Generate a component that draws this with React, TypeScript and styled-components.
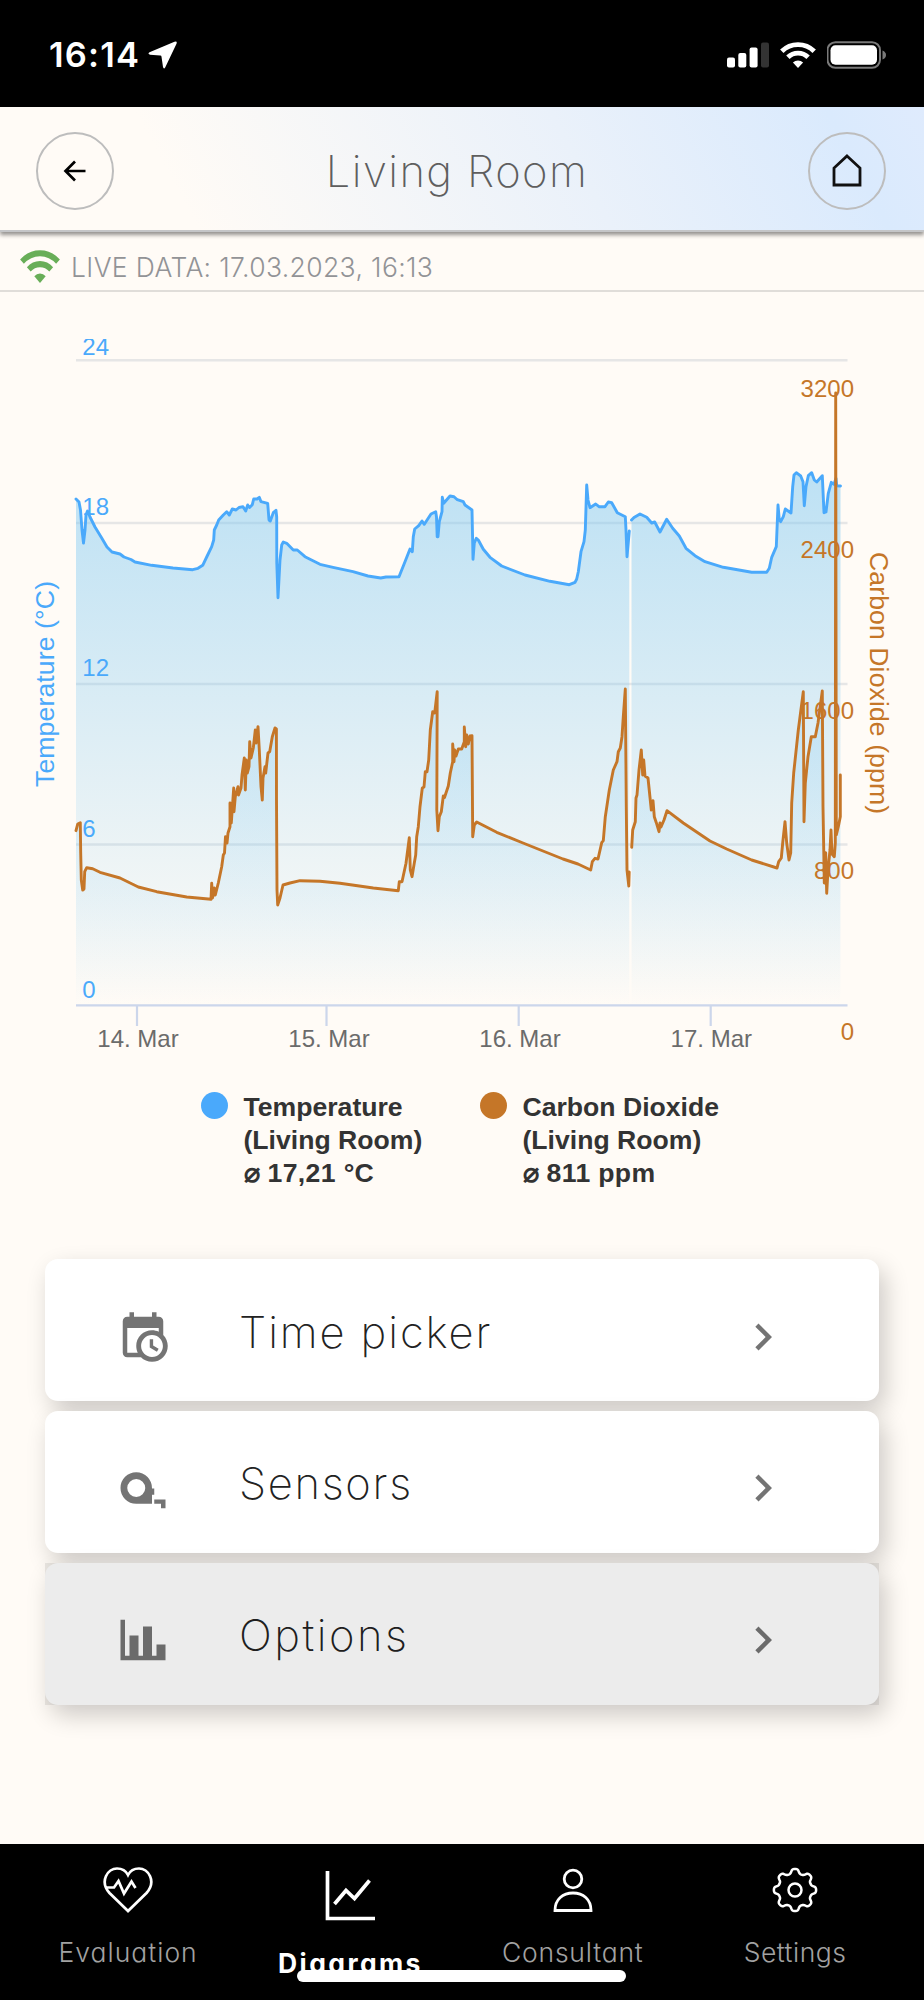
import React from "react";
import styled, { createGlobalStyle } from "styled-components";

const GlobalStyle = createGlobalStyle`
  * { box-sizing: border-box; }
  body { margin: 0; background: #fffbf6; }
`;

const BLUE = "#4aa9fb";
const ORANGE = "#c57628";
const THIN = `Inter, "Liberation Sans", sans-serif`;

const Screen = styled.div`
  width: 924px;
  height: 2000px;
  display: flex;
  flex-direction: column;
  background: #fffbf6;
  overflow: hidden;
  font-family: ${THIN};
`;

const StatusBar = styled.div`
  height: 107px;
  flex: none;
  background: #000;
  color: #fff;
  display: flex;
  align-items: center;
  justify-content: space-between;
  padding: 3px 38px 0 49px;
`;

const Clock = styled.div`
  display: flex;
  align-items: center;
  gap: 8px;
  font-size: 34.5px;
  font-weight: 600;
  line-height: 40px;
  letter-spacing: 1.2px;
`;

const StatusIcons = styled.div`
  display: flex;
  align-items: center;
  gap: 11px;
`;

const Header = styled.header`
  height: 125px;
  flex: none;
  display: flex;
  align-items: center;
  justify-content: space-between;
  padding: 5px 38px 0 36px;
  z-index: 1;
  background: linear-gradient(62deg, #fffbf6 20%, #eaf1fa 62%, #daeafd 90%, #dfebfd 100%);
  border-bottom: 2px solid #c4c5c7;
  box-shadow: 0 3px 4px rgba(0, 0, 0, 0.42);
`;

const Title = styled.h1`
  margin: 0;
  padding-right: 8px;
  font-size: 43.5px;
  font-weight: 200;
  letter-spacing: 1.4px;
  color: #5e5e5e;
`;

const RoundButton = styled.button`
  width: 78px;
  height: 78px;
  border-radius: 50%;
  border: 2px solid #bdbdbd;
  background: transparent;
  padding: 0;
  display: grid;
  place-items: center;
`;

const LiveRow = styled.div`
  height: 60px;
  flex: none;
  display: flex;
  align-items: center;
  gap: 11px;
  padding: 10px 20px 0;
  border-bottom: 2px solid #e0ddd9;
  color: #929396;
`;

const LiveText = styled.span`
  padding-top: 2px;
  font-size: 26.5px;
  font-weight: 300;
  letter-spacing: 0.37px;
`;

const GreenMark = styled.span`
  display: flex;
  color: #68ae58;
`;

const ChartArea = styled.div`
  height: 781px;
  flex: none;
  padding-top: 47px;
  svg { display: block; }
`;

const Legend = styled.div`
  height: 186px;
  flex: none;
  display: flex;
  padding: 17.5px 0 0 200.5px;
`;

const LegendItem = styled.div`
  width: 279px;
  display: flex;
  gap: 16px;
  font: bold 26.6px/33.4px "Liberation Sans", Arial, sans-serif;
  color: #333;
`;

const Average = styled.span`
  letter-spacing: 0.35px;
`;

const Dot = styled.span<{ $color: string }>`
  width: 27px;
  height: 27px;
  border-radius: 50%;
  margin-top: 1px;
  background: ${(p) => p.$color};
`;

const Menu = styled.div`
  flex: 1;
  padding: 0 45px;
  display: flex;
  flex-direction: column;
  gap: 9.6px;
`;

const MenuCard = styled.button<{ $pressed?: boolean }>`
  position: relative;
  height: 142.2px;
  border: 0;
  padding: 13px 89px 0 71px;
  border-radius: 13px;
  background: #fff;
  box-shadow: 6px 10px 24px rgba(0, 0, 0, 0.2);
  display: flex;
  align-items: center;
  color: #747474;
  &::after {
    content: "";
    display: ${(p) => (p.$pressed ? "block" : "none")};
    position: absolute;
    inset: 0;
    background: rgba(0, 0, 0, 0.075);
  }
`;

const MenuLabel = styled.span<{ $spacing: number }>`
  flex: 1;
  margin: -10px 0 0 69px;
  text-align: left;
  font: 200 43.5px/54px ${THIN};
  letter-spacing: ${(p) => p.$spacing}px;
  color: #222;
`;

const Nav = styled.nav`
  position: relative;
  height: 156px;
  flex: none;
  background: #000;
  display: grid;
  grid-template-columns: repeat(4, 222.3px);
  padding-left: 17px;
  overflow: hidden;
`;

const NavItem = styled.div<{ $active?: boolean; $spacing: number }>`
  display: flex;
  flex-direction: column;
  align-items: center;
  padding-top: ${(p) => (p.$active ? 26 : 22)}px;
  gap: ${(p) => (p.$active ? 25 : 22)}px;
  color: ${(p) => (p.$active ? "#fff" : "#a2a2a2")};
  font-size: 26.500px;
  line-height: 32px;
  font-weight: ${(p) => (p.$active ? 700 : 300)};
  font-feature-settings: "cv11";
  letter-spacing: ${(p) => p.$spacing}px;
  svg { color: #fff; flex: none; }
`;

const HomeIndicator = styled.div`
  position: absolute;
  left: 297px;
  top: 126px;
  width: 329px;
  height: 12px;
  border-radius: 6px;
  background: #fff;
`;

type Pt = [number, number];

const tempSegments: Pt[][] = [
  [
    [76, 499], [79, 502], [80.5, 510], [82, 530], [83.5, 543], [85, 530], [86, 515], [87.5, 511], [90, 517], [95, 527],
    [101.7, 538], [107, 547], [112, 552], [120, 554], [124, 557], [131, 559.5], [135, 562], [151.7, 565.3], [173, 568],
    [192.7, 569.7], [198, 568.3], [202.7, 565.3], [206.7, 557], [211.7, 546.7], [213.7, 540], [214.3, 530], [216.7, 525],
    [218.7, 520], [223.3, 515], [226.7, 511.7], [229.3, 515], [232.3, 509], [236, 510], [239, 507.5], [243, 506.7],
    [245.7, 511], [247.7, 505], [249.5, 507.5], [252.3, 504.7], [253.7, 499], [257, 499], [259.3, 497.3], [261, 501.7],
    [267.7, 503.3], [269, 520], [270.3, 521], [273.3, 512.7], [276, 510.3], [276.7, 517], [276.8, 563], [278, 597.7],
    [280, 560], [281.7, 545], [283.3, 542], [286.7, 543.3], [293.3, 550], [297.3, 550], [305, 556.7], [320, 564.3],
    [333, 567.3], [353, 571.7], [368, 576], [380.7, 578], [386, 577], [399, 576.7], [405, 561.7], [410, 549],
    [412.3, 551.7], [413.3, 536.7], [414.7, 529], [418.7, 525.7], [422, 521], [424.3, 524.3], [431, 514], [435.7, 511.7],
    [436.5, 517], [437.2, 536.7], [438, 536.7], [439.3, 521.7], [442, 511.7], [442.3, 497.3], [443.7, 503.3], [450, 496],
    [454, 496.7], [457.3, 499.7], [463.3, 501.7], [465, 505], [472, 510], [472.7, 543.3], [473, 559.3], [474.3, 543],
    [476.3, 538.3], [478.3, 540], [483.3, 549.3], [490, 557.3], [501.7, 566], [525, 575], [550, 581.3], [569.3, 584.7],
    [575, 582.3], [576.7, 579], [578.3, 571.7], [581, 551.7], [584, 541.7], [585.3, 530], [586.7, 485], [588, 500],
    [590, 507.7], [595.7, 504], [599, 506.7], [605, 506.7], [608.3, 502], [611.7, 502.7], [617.3, 512.7], [625.3, 516.7],
    [626, 530], [627, 556.7], [629.3, 531],
  ],
  [
    [631.5, 520], [634, 517.5], [640, 514], [646.7, 517.3], [651.7, 523], [654.7, 522], [660, 532], [666.7, 519.3],
    [672.7, 528.3], [679.3, 536], [686, 548.3], [695, 555.7], [705, 561.7], [723.3, 567.3], [751.7, 572.3],
    [766.7, 572.3], [769.3, 568.3], [771.7, 557.3], [776.3, 546.7], [778, 505], [779.3, 520], [780.7, 521.7],
    [783.3, 516.7], [785.3, 509], [791, 513], [792.7, 486.7], [794, 475], [796.3, 472.7], [800.7, 476], [803, 481.7],
    [804.3, 505.7], [806, 486.7], [808.3, 475.7], [811.7, 472.7], [814.3, 480], [816.7, 482], [822.3, 475.7],
    [824, 512.7], [826, 512], [828.3, 493.3], [831.3, 482.3], [834, 484.3], [836, 478.3], [836.7, 485.7], [840.5, 486],
  ],
];

const co2Segments: Pt[][] = [
  [
    [76, 830.7], [77.7, 824], [80.3, 822.7], [80.7, 853], [81.3, 880], [82.7, 890], [84, 889], [84.7, 871.7],
    [86.7, 867.7], [92.7, 868.7], [100, 872.3], [120, 878], [138.3, 887], [156.7, 891.7], [186.7, 897], [211, 899.3],
    [211.7, 883.3], [212.5, 898], [214.3, 888], [215.3, 895], [218.3, 883], [221.7, 866.7], [223.3, 855], [224.5, 853],
    [225.5, 836.7], [227, 843], [228, 833], [230, 826.7], [230, 803], [231.3, 823], [233.7, 788], [234, 811.7],
    [235.3, 796.7], [238, 786.7], [238.5, 795], [241, 788], [242, 775], [244.3, 758], [245.3, 790], [246.3, 760],
    [247.3, 773], [249, 766.7], [249.7, 741.7], [251, 758], [253.3, 748], [255.3, 730], [256, 743], [258, 726.7],
    [259.3, 750], [261, 786.7], [262.3, 800], [263, 778], [265, 766.7], [265.7, 773], [268, 753], [269.7, 751.7],
    [272.3, 736.7], [275, 728], [276.4, 729], [276.5, 800], [277, 890], [277.7, 905], [280, 898], [283, 885],
    [290, 883], [300, 880.7], [320, 881.3], [340, 883.3], [373.3, 888], [398.3, 890.7], [399.3, 881.7], [402, 881.7], [406, 863.3],
    [409.3, 837.7], [410.3, 870], [412, 876.7], [414.3, 863], [415.7, 855], [416.7, 836.7], [418.3, 826.7],
    [420, 806.7], [422.3, 788], [424, 787], [425.3, 771.7], [427, 771.7], [428.7, 760], [430.3, 730], [432.7, 711.7],
    [434.7, 713], [437.2, 691.7], [436.8, 810], [438, 830.7], [439.3, 816.7], [441.3, 811.7], [443.3, 796],
    [444.5, 797.5], [448.3, 786], [450.3, 773], [452.7, 761.7], [452.7, 744], [454, 761.7], [454.7, 750], [456, 756],
    [458.3, 749], [461.7, 749], [464.3, 741.7], [464.3, 727], [465.7, 746.7], [466.7, 735], [468.3, 744], [470, 736],
    [472, 735.7], [472.7, 836.7], [474.3, 825], [476.7, 822], [496.7, 832.3], [523, 843], [563, 859], [578, 864],
    [590.7, 870], [592.3, 861.7], [595, 858.3], [598, 859], [601.7, 842.7], [603.3, 840.7], [605.3, 816.7],
    [609.3, 790], [613.3, 770], [617, 761.7], [618.3, 751.7], [620.3, 748], [622, 736.7], [623.3, 716.7], [625.3, 689],
    [626.3, 806.7], [627, 870], [628.8, 886], [629.2, 872],
  ],
  [
    [631.7, 847.3], [632.7, 830], [635.3, 821.7], [636, 798], [637, 795], [639, 770], [641.3, 750], [642.7, 775],
    [643.7, 760], [645, 776], [648, 778], [651.3, 810], [653, 800.7], [654.3, 816.7], [656.3, 822.7], [659, 831.7],
    [660, 823], [661, 827], [664, 820], [667, 810.7], [683.3, 823], [710, 841], [726.7, 849], [751.7, 860], [777, 868],
    [778.7, 861.7], [781.3, 858], [782.7, 843], [785, 821.7], [786.7, 843], [789, 860], [790.7, 853], [791.7, 803],
    [793.7, 773], [798.3, 730], [803.3, 691.7], [804, 821.7], [805.3, 783], [808, 756.7], [811.3, 736.7],
    [815.3, 736.7], [818, 723], [822.3, 691], [823, 806.7], [824.3, 883], [825.7, 852.7], [826.7, 893.3], [828, 870],
    [830, 850], [831, 830], [832, 854], [834.3, 856.7], [835.3, 843], [835.7, 393], [836.3, 835], [838.3, 826.7],
    [840.3, 816.7], [840.3, 775],
  ],
];

const BASE = 1005;
const line = (pts: Pt[]) => "M" + pts.map((p) => p.join(" ")).join("L");
const area = (pts: Pt[]) => `${line(pts)}L${pts[pts.length - 1][0]} ${BASE}L${pts[0][0]} ${BASE}Z`;

const Chart = () => (
  <svg width="924" height="721" viewBox="0 339 924 721" fontFamily="'Liberation Sans', Arial, sans-serif" fontSize="24">
    <defs>
      <linearGradient id="tempFill" gradientUnits="userSpaceOnUse" x1="0" y1="472" x2="0" y2={BASE}>
        <stop offset="0" stopColor="#7bc7f2" stopOpacity="0.5" />
        <stop offset="1" stopColor="#7bc7f2" stopOpacity="0" />
      </linearGradient>
      <linearGradient id="co2Fill" gradientUnits="userSpaceOnUse" x1="0" y1="393" x2="0" y2={BASE}>
        <stop offset="0" stopColor="#7bc7f2" stopOpacity="0.55" />
        <stop offset="1" stopColor="#7bc7f2" stopOpacity="0" />
      </linearGradient>
    </defs>
    {[360.3, 523, 684, 844.5].map((y) => (
      <line key={y} x1="76" x2="847.5" y1={y} y2={y} stroke="#e6e6e6" strokeWidth="2.4" />
    ))}
    {tempSegments.map((s, i) => <path key={i} d={area(s)} fill="url(#tempFill)" />)}
    {co2Segments.map((s, i) => <path key={i} d={area(s)} fill="url(#co2Fill)" />)}
    <path d="M76 1005.3H847.5M137 1005V1026M326.5 1005V1026M518.7 1005V1026M710.7 1005V1026" stroke="#ccd6eb" strokeWidth="2.2" />
    <g fill={BLUE}>
      <text x="82.3" y="354.5">24</text>
      <text x="82.3" y="515.3">18</text>
      <text x="82.3" y="676">12</text>
      <text x="82.3" y="837">6</text>
      <text x="82.3" y="997.5">0</text>
    </g>
    <g fill={ORANGE} textAnchor="end">
      <text x="854" y="397">3200</text>
      <text x="854" y="558">2400</text>
      <text x="854" y="719">1600</text>
      <text x="854" y="878.7">800</text>
      <text x="854" y="1039.5">0</text>
    </g>
    <g fill="#6b6b6b" textAnchor="middle">
      <text x="138" y="1046.7">14. Mar</text>
      <text x="329" y="1046.7">15. Mar</text>
      <text x="520" y="1046.7">16. Mar</text>
      <text x="711.3" y="1046.7">17. Mar</text>
    </g>
    <text transform="translate(53.500 684) rotate(-90)" textAnchor="middle" fontSize="26.600" textLength="206" fill={BLUE}>Temperature (°C)</text>
    <text transform="translate(870 683) rotate(90)" textAnchor="middle" fontSize="26.600" textLength="262" fill={ORANGE}>Carbon Dioxide (ppm)</text>
    <g fill="none" strokeWidth="2.900" strokeLinejoin="round" strokeLinecap="round">
      {tempSegments.map((s, i) => <path key={i} d={line(s)} stroke={BLUE} />)}
      {co2Segments.map((s, i) => <path key={i} d={line(s)} stroke={ORANGE} />)}
    </g>
  </svg>
);

const MenuIcon = ({ d }: { d: string }) => (
  <svg width="54" height="54" viewBox="0 0 24 24" fill="currentColor" fillRule="evenodd"><path d={d} /></svg>
);

const icons = {
  calendar:
    "M15,13H16.5V15.82L18.94,17.23L18.19,18.53L15,16.69V13M19,8H5V19H9.67C9.24,18.09 9,17.07 9,16A7,7 0 0,1 16,9C17.07,9 18.09,9.24 19,9.67V8M5,21C3.89,21 3,20.1 3,19V5C3,3.89 3.89,3 5,3H6V1H8V3H16V1H18V3H19A2,2 0 0,1 21,5V11.1C22.24,12.36 23,14.09 23,16A7,7 0 0,1 16,23C14.09,23 12.36,22.24 11.1,21H5M16,11.15A4.85,4.85 0 0,0 11.15,16C11.15,18.68 13.32,20.85 16,20.85A4.85,4.85 0 0,0 20.85,16C20.85,13.32 18.68,11.15 16,11.15Z",
  tape: "M9 5A7 7 0 0 1 16 12.2H17V15H16V19H9A7 7 0 0 1 9 5ZM9 8A4 4 0 1 0 9 16A4 4 0 0 0 9 8ZM17 17.1H22V21H20V19H17Z",
  bars: "M22,21H2V3H4V19H6V10H10V19H12V6H16V19H18V14H22V21Z",
  chevron: "M8.59,16.58L13.17,12L8.59,7.41L10,6L16,12L10,18L8.59,16.58Z",
};

const WifiFan = ({ width, height }: { width: number; height: number }) => (
  <svg width={width} height={height} viewBox="0 0 36 26" preserveAspectRatio="none" fill="none" stroke="currentColor" strokeWidth="4.8">
    <path d="M1.8 9.2A23 23 0 0 1 34.2 9.2" />
    <path d="M7.9 15.3A14.3 14.3 0 0 1 28.1 15.3" />
    <path d="M18 26L12.9 20.6A7.2 7.2 0 0 1 23.1 20.6Z" fill="currentColor" stroke="none" />
  </svg>
);

const GearIcon = () => {
  const pts: string[] = [];
  for (let i = 0; i <= 160; i++) {
    const a = (i / 160) * Math.PI * 2;
    const r = 18.9 + 2.4 * Math.tanh(1.6 * Math.cos(8 * a));
    pts.push(`${(24 + r * Math.sin(a)).toFixed(2)} ${(24 - r * Math.cos(a)).toFixed(2)}`);
  }
  return (
    <svg width="48" height="48" viewBox="0 0 48 48" fill="none" stroke="currentColor" strokeWidth="2.5">
      <path d={"M" + pts.join("L") + "Z"} />
      <circle cx="24" cy="24" r="6.5" />
    </svg>
  );
};

export default function App() {
  return (
    <Screen>
      <GlobalStyle />
      <StatusBar>
        <Clock>
          16:14
          <svg width="29" height="28" viewBox="0 0 29 28" fill="#fff"><path d="M26.500 .8Q29.500 -.3 28.500 2.700L17.300 26.300Q15.800 28.800 15 26L13.500 15.800Q13.400 14.700 12.300 14.600L2 13.700Q-.8 12.900 1.500 11.300Z" /></svg>
        </Clock>
        <StatusIcons>
          <svg width="42" height="26" viewBox="0 0 42 26" fill="#fff">
            <rect x="0" y="15.500" width="8" height="10" rx="2" />
            <rect x="11.300" y="11" width="8" height="14.500" rx="2" />
            <rect x="22.600" y="5.500" width="8" height="20" rx="2" />
            <rect x="34" y="0.500" width="8" height="25" rx="2" opacity="0.2" />
          </svg>
          <WifiFan width={36} height={26} />
          <svg width="59" height="28" viewBox="0.500 0 59 28">
            <rect x="1" y="1.200" width="52.500" height="25.600" rx="8" fill="none" stroke="#7a7a7a" strokeWidth="2" />
            <rect x="4" y="4.200" width="46.500" height="19.600" rx="5" fill="#fff" />
            <path d="M56 9.500Q59.500 11 59.500 14T56 18.500Z" fill="#7a7a7a" />
          </svg>
        </StatusIcons>
      </StatusBar>
      <Header>
        <RoundButton>
          <svg width="24" height="24" viewBox="0 0 24 24" fill="none" stroke="#000" strokeWidth="2.700"><path d="M22.500 12H3M12 2.500L2.500 12L12 21.500" /></svg>
        </RoundButton>
        <Title>Living Room</Title>
        <RoundButton>
          <svg width="32" height="36" viewBox="0 0 32 36" fill="none" stroke="#111" strokeWidth="2.800"><path d="M16 3L29 15V32H3V15Z" /></svg>
        </RoundButton>
      </Header>
      <LiveRow>
        <GreenMark><WifiFan width={40} height={33} /></GreenMark>
        <LiveText>LIVE DATA: 17.03.2023, 16:13</LiveText>
      </LiveRow>
      <ChartArea><Chart /></ChartArea>
      <Legend>
        <LegendItem><Dot $color={BLUE} /><span>Temperature<br />(Living Room)<br /><Average>⌀ 17,21 °C</Average></span></LegendItem>
        <LegendItem><Dot $color={ORANGE} /><span>Carbon Dioxide<br />(Living Room)<br /><Average>⌀ 811 ppm</Average></span></LegendItem>
      </Legend>
      <Menu>
        <MenuCard><MenuIcon d={icons.calendar} /><MenuLabel $spacing={1.9}>Time picker</MenuLabel><MenuIcon d={icons.chevron} /></MenuCard>
        <MenuCard><MenuIcon d={icons.tape} /><MenuLabel $spacing={1.7}>Sensors</MenuLabel><MenuIcon d={icons.chevron} /></MenuCard>
        <MenuCard $pressed><MenuIcon d={icons.bars} /><MenuLabel $spacing={2.5}>Options</MenuLabel><MenuIcon d={icons.chevron} /></MenuCard>
      </Menu>
      <Nav>
        <NavItem $spacing={1}>
          <svg width="52" height="48" viewBox="0 0 52 48" fill="none" stroke="currentColor" strokeWidth="2.700">
            <path d="M26 45L7.500 27C-3 15 6 2.500 15 2.500C20 2.500 24 5 26 9C28 5 32 2.500 37 2.500C46 2.500 55 15 44.500 27Z" />
            <path d="M3 21.500H12L16.500 15L22 27.500L29.500 15.500L33.500 22" />
          </svg>
          Evaluation
        </NavItem>
        <NavItem $active $spacing={2.4}>
          <svg width="52" height="52" viewBox="0 0 52 52" fill="none" stroke="currentColor">
            <path d="M3.500 1V48.500H51" strokeWidth="3.700" />
            <path d="M10.500 34L22 20.500L30.500 28.500L45.500 10.500" strokeWidth="3.700" />
          </svg>
          Diagrams
        </NavItem>
        <NavItem $spacing={0.8}>
          <svg width="48" height="48" viewBox="0 0 48 48" fill="none" stroke="currentColor" strokeWidth="2.800">
            <circle cx="24" cy="13" r="8.800" />
            <path d="M6 44.500C6 33 14 27 24 27S42 33 42 44.500Z" />
          </svg>
          Consultant
        </NavItem>
        <NavItem $spacing={0.5}><GearIcon />Settings</NavItem>
        <HomeIndicator />
      </Nav>
    </Screen>
  );
}
